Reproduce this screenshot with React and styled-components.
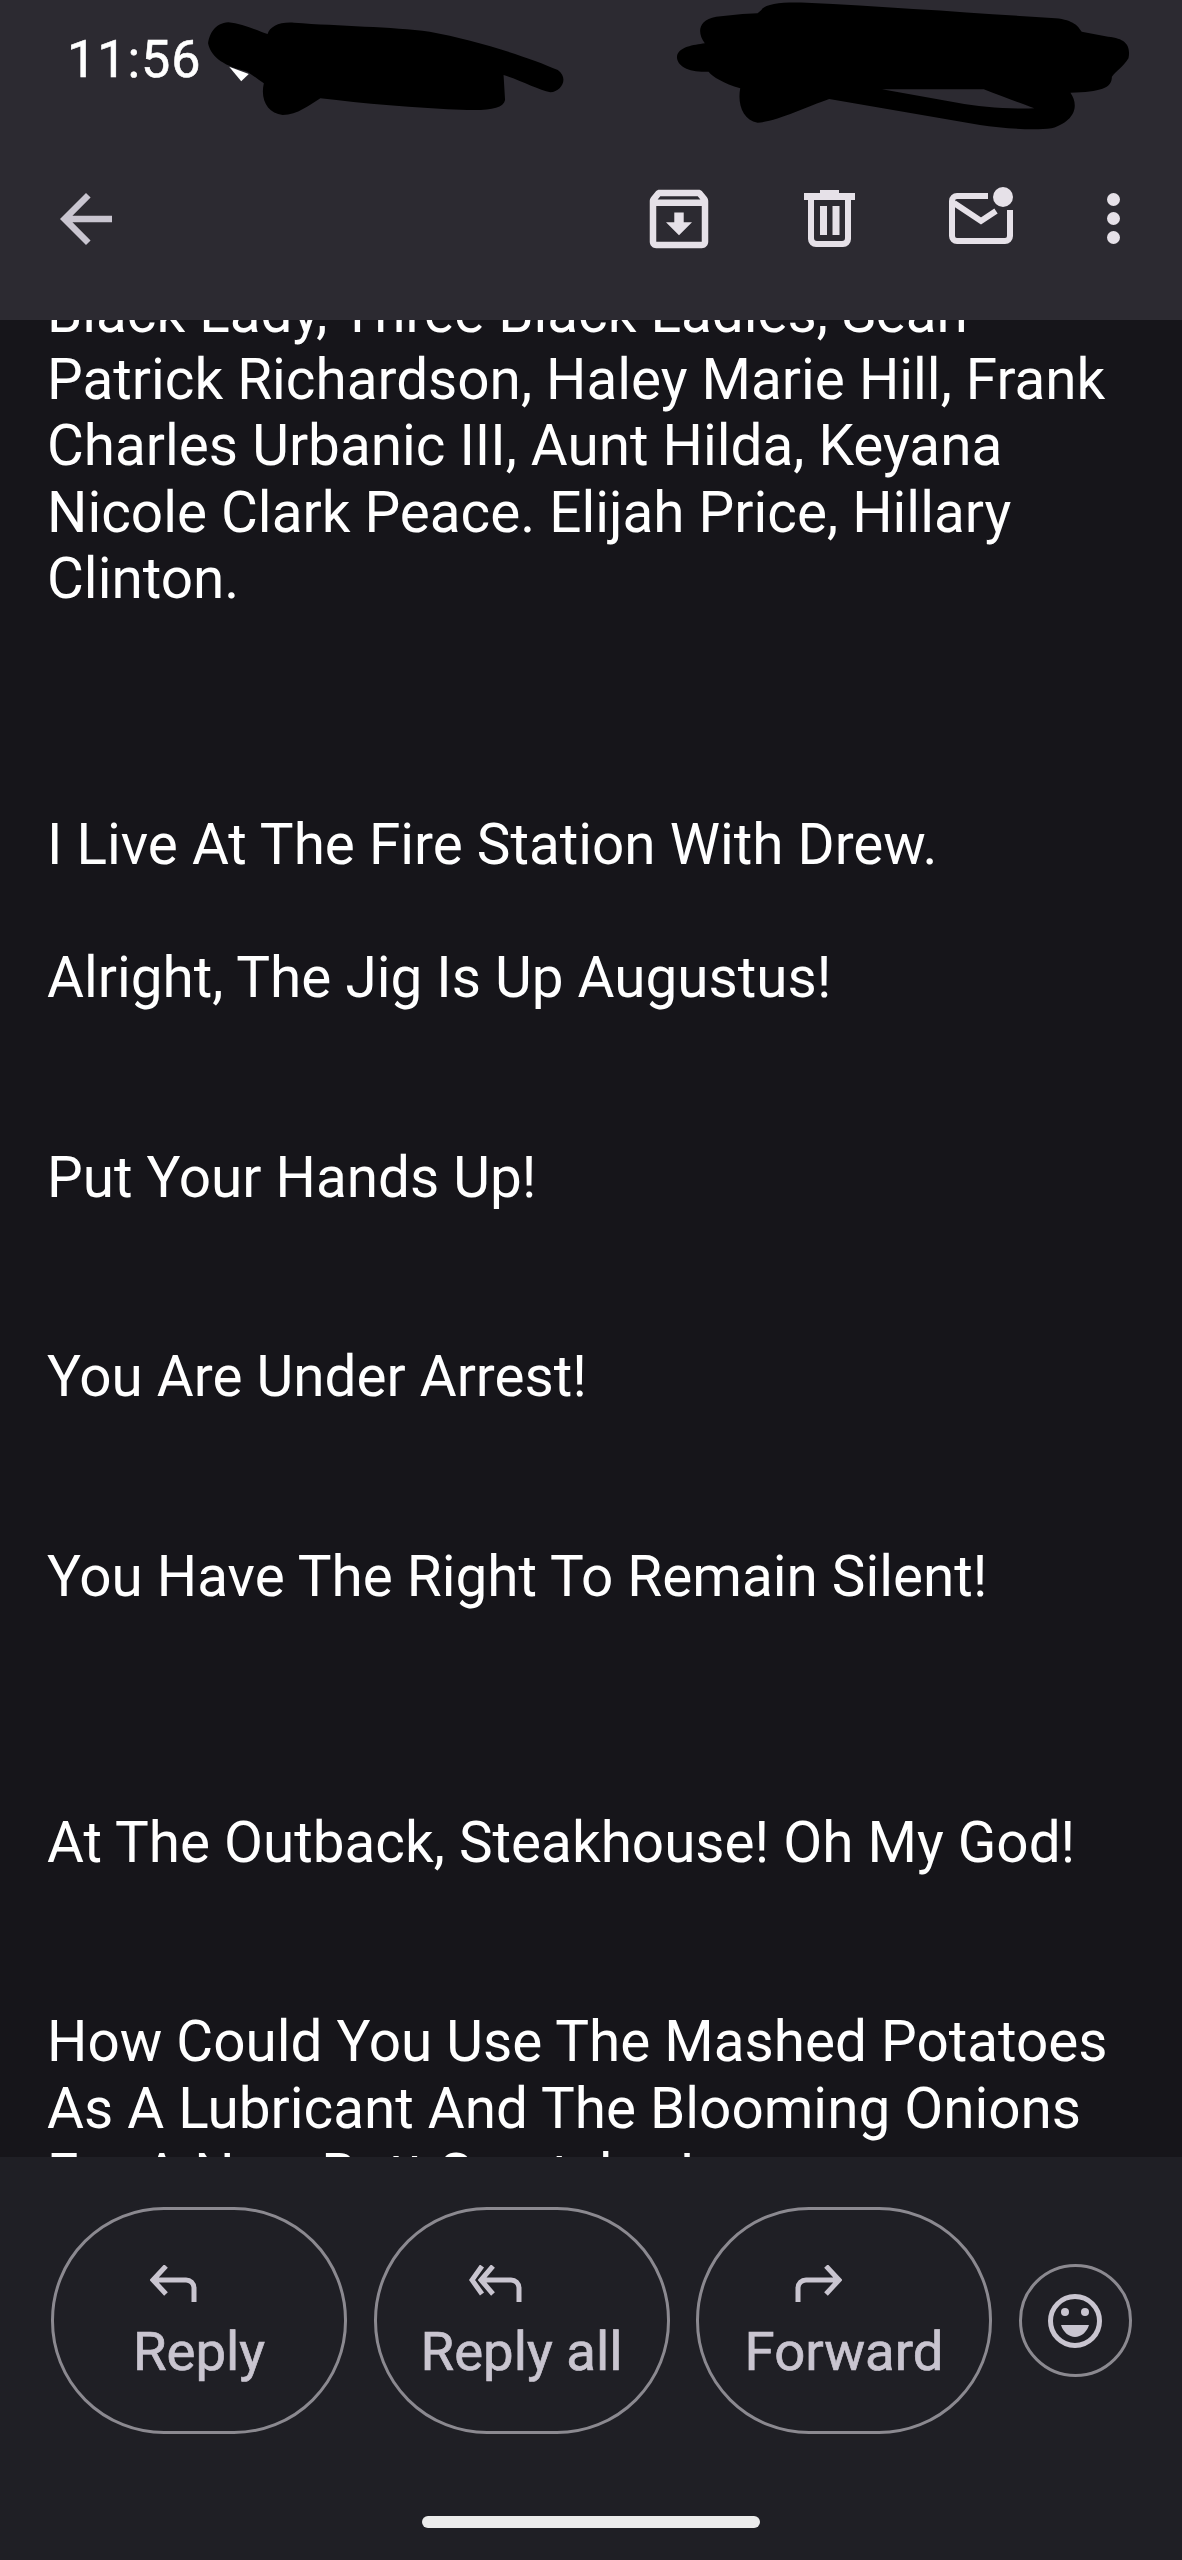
import React from 'react';
import styled, { createGlobalStyle } from 'styled-components';

const GlobalStyle = createGlobalStyle`
  html, body {
    margin: 0;
    padding: 0;
    background: #16151a;
  }
`;

const Screen = styled.div`
  position: relative;
  display: flex;
  flex-direction: column;
  width: 1182px;
  height: 2560px;
  overflow: hidden;
  font-family: Roboto, 'Liberation Sans', sans-serif;
  background: #16151a;
`;

const Header = styled.header`
  position: relative;
  z-index: 1;
  flex: none;
  height: 320px;
  background: #2c2a31;
  box-sizing: border-box;
`;

const StatusBar = styled.div`
  height: 187px;
  box-sizing: border-box;
  padding: 28px 0 0 67px;
`;

const Clock = styled.span`
  font-size: 52px;
  line-height: 64px;
  letter-spacing: 1px;
  color: #fff;
  -webkit-text-stroke: 0.6px #fff;
`;

const Scribble = styled.svg`
  position: absolute;
  z-index: 2;
  top: 0;
  left: 0;
  width: 1182px;
  height: 340px;
`;

const Toolbar = styled.div`
  display: flex;
  align-items: flex-start;
  height: 70px;
`;

const BackIcon = styled.svg`
  flex: none;
  width: 78px;
  height: 78px;
  margin: -7px 0 0 47px;
  fill: #c9c5d0;
`;

const ToolIcon = styled.svg`
  flex: none;
  margin-left: ${p => p.$left}px;
  margin-top: ${p => p.$top || 0}px;
  color: #e6e1e8;
`;

const Body = styled.main`
  flex: 1;
  min-height: 0;
  overflow: hidden;
  padding: 0 47px;
  color: #fff;
  font-size: 56.65px;
  line-height: 66.5px;
`;

const Para = styled.p`
  margin: ${p => p.$lines * 66.5}px 0 0;
`;

const FirstPara = styled(Para)`
  margin-top: -40px;
`;

const BottomBar = styled.footer`
  flex: none;
  height: 403px;
  box-sizing: border-box;
  padding-top: 50px;
  display: flex;
  flex-direction: column;
  background: #1f1f25;
`;

const Actions = styled.div`
  display: flex;
  align-items: center;
  gap: 26.5px;
  padding-left: 51px;
`;

const ActionButton = styled.button`
  flex: none;
  width: 296px;
  height: 227px;
  box-sizing: border-box;
  padding: 55px 0 0;
  display: flex;
  flex-direction: column;
  align-items: center;
  background: transparent;
  border: 3px solid #8b8990;
  border-radius: 113px;
  font-family: Roboto, 'Liberation Sans', sans-serif;
  font-size: 54.5px;
  line-height: 60px;
  color: #c9c5d0;
  -webkit-text-stroke: 0.7px #c9c5d0;
`;

const ActionIcon = styled.svg`
  display: block;
  margin: 0 52px 19px 0;
  fill: none;
  stroke: #c9c5d0;
  stroke-width: 5;
`;

const EmojiButton = styled.button`
  flex: none;
  width: 113px;
  height: 113px;
  box-sizing: border-box;
  padding: 0;
  display: flex;
  align-items: center;
  justify-content: center;
  background: transparent;
  border: 3px solid #8b8990;
  border-radius: 50%;
`;

const HomeBar = styled.div`
  align-self: center;
  width: 338px;
  height: 12px;
  margin-top: 82px;
  border-radius: 6px;
  background: #ececec;
`;

function ArchiveIcon() {
  return (
    <ToolIcon $left={515} $top={-7} width="78" height="78" viewBox="0 0 24 24" fill="currentColor">
      <path d="M20.54 5.23l-1.39-1.68C18.88 3.21 18.47 3 18 3H6c-.47 0-.88.21-1.16.55L3.46 5.23C3.17 5.57 3 6.02 3 6.5V19c0 1.1.9 2 2 2h14c1.1 0 2-.9 2-2V6.5c0-.48-.17-.93-.46-1.27zM6.24 5h11.52l.83 1H5.42l.82-1zM5 19V8h14v11H5zm8.45-9h-2.9v3H8l4 4 4-4h-2.55z" />
    </ToolIcon>
  );
}

function TrashIcon() {
  return (
    <ToolIcon $left={86} $top={3} width="51" height="57" viewBox="0 0 51 57" fill="currentColor">
      <rect x="16" y="0" width="19" height="4" />
      <rect x="0" y="3" width="51" height="7" />
      <path d="M4 8h6v40a3 3 0 0 0 3 3h25a3 3 0 0 0 3-3V8h6v41a8 8 0 0 1-8 8H12a8 8 0 0 1-8-8z" />
      <rect x="16" y="16" width="7" height="29" />
      <rect x="28.5" y="16" width="7" height="29" />
    </ToolIcon>
  );
}

function MailIcon() {
  return (
    <ToolIcon $left={94} $top={0} width="64" height="57" viewBox="0 0 64 57">
      <path
        d="M39 9H8a5 5 0 0 0-5 5v35a5 5 0 0 0 5 5h48a5 5 0 0 0 5-5V23"
        fill="none"
        stroke="currentColor"
        strokeWidth="6"
      />
      <path d="M5 16l27 18 15-10" fill="none" stroke="currentColor" strokeWidth="6" />
      <circle cx="54" cy="10" r="10" fill="currentColor" />
    </ToolIcon>
  );
}

function DotsIcon() {
  return (
    <ToolIcon $left={94} $top={6} width="13" height="51" viewBox="0 0 13 51" fill="currentColor">
      <circle cx="6.5" cy="6.5" r="6.5" />
      <circle cx="6.5" cy="25.5" r="6.5" />
      <circle cx="6.5" cy="44.5" r="6.5" />
    </ToolIcon>
  );
}

function ReplyIcon() {
  return (
    <ActionIcon width="47" height="37" viewBox="0 0 47 37">
      <path d="M16 1L3 15l13 14M3 15h33a8 8 0 0 1 8 8v14" />
    </ActionIcon>
  );
}

function ReplyAllIcon() {
  return (
    <ActionIcon width="53" height="37" viewBox="0 0 53 37">
      <path d="M13 1L3 15l10 14M24 1L12 15l12 14M12 15h30a8 8 0 0 1 8 8v14" />
    </ActionIcon>
  );
}

function ForwardIcon() {
  return (
    <ActionIcon width="47" height="37" viewBox="0 0 47 37">
      <path d="M31 1l13 14-13 14M44 15H11a8 8 0 0 0-8 8v14" />
    </ActionIcon>
  );
}

function EmojiIcon() {
  return (
    <svg width="56" height="56" viewBox="0 0 56 56">
      <circle cx="28" cy="28" r="24.5" fill="none" stroke="#c9c5d0" strokeWidth="5" />
      <circle cx="18" cy="19" r="4" fill="#c9c5d0" />
      <circle cx="38" cy="19" r="4" fill="#c9c5d0" />
      <path d="M14 32h28c-2 7-8 12-14 12s-12-5-14-12z" fill="#c9c5d0" />
    </svg>
  );
}

export default function App() {
  return (
    <Screen>
      <GlobalStyle />
      <Header>
        <StatusBar>
          <Clock>11:56</Clock>
        </StatusBar>
        <Toolbar>
          <BackIcon viewBox="0 0 24 24">
            <path d="M20 11H7.83l5.59-5.59L12 4l-8 8 8 8 1.41-1.41L7.83 13H20v-2z" />
          </BackIcon>
          <ArchiveIcon />
          <TrashIcon />
          <MailIcon />
          <DotsIcon />
        </Toolbar>
      </Header>
      <Body>
        <FirstPara $lines={0}>
          Black Lady, Three Black Ladies, Sean Patrick Richardson, Haley Marie Hill, Frank Charles
          Urbanic III, Aunt Hilda, Keyana Nicole Clark Peace. Elijah Price, Hillary Clinton.
        </FirstPara>
        <Para $lines={3}>I Live At The Fire Station With Drew.</Para>
        <Para $lines={1}>Alright, The Jig Is Up Augustus!</Para>
        <Para $lines={2}>Put Your Hands Up!</Para>
        <Para $lines={2}>You Are Under Arrest!</Para>
        <Para $lines={2}>You Have The Right To Remain Silent!</Para>
        <Para $lines={3}>At The Outback, Steakhouse! Oh My God!</Para>
        <Para $lines={2}>
          How Could You Use The Mashed Potatoes As A Lubricant And The Blooming Onions For A New
          Butt Scratcher!
        </Para>
      </Body>
      <BottomBar>
        <Actions>
          <ActionButton type="button">
            <ReplyIcon />
            Reply
          </ActionButton>
          <ActionButton type="button">
            <ReplyAllIcon />
            Reply all
          </ActionButton>
          <ActionButton type="button">
            <ForwardIcon />
            Forward
          </ActionButton>
          <EmojiButton type="button">
            <EmojiIcon />
          </EmojiButton>
        </Actions>
        <HomeBar />
      </BottomBar>
      <Scribble viewBox="0 0 1568 1020" preserveAspectRatio="none">
        <path d="M304 200L330 222L320 244Z" fill="#fff" />
        <path d="M303 67C320 70 340 90 355 102C358 80 370 65 390 68C450 78 520 80 570 95C630 120 700 170 740 210C755 235 745 275 730 277C715 270 690 240 668 225L670 300C668 325 650 332 620 330C550 325 480 310 425 295C410 315 395 345 375 345C355 340 345 300 350 250C340 235 335 225 328 215C300 200 280 175 276 130C278 100 285 70 303 67Z" fill="#000" />
        <path
          fillRule="evenodd"
          d="M1010 30C1015 10 1040 5 1070 8C1180 20 1300 40 1400 55C1425 60 1430 80 1435 95L1470 110C1495 115 1500 140 1497 175C1490 200 1480 215 1475 230C1475 265 1460 275 1420 278C1430 310 1430 360 1395 385C1370 392 1330 385 1300 375L1100 297C1070 320 1030 365 1005 368C985 360 978 310 982 265C960 250 945 230 940 215C915 218 898 200 898 170C900 140 920 135 935 130C925 100 925 60 950 50L985 42L1005 40ZM1170 268L1305 268C1330 290 1355 310 1372 325C1340 328 1300 320 1270 308Z"
          fill="#000"
        />
      </Scribble>
    </Screen>
  );
}
